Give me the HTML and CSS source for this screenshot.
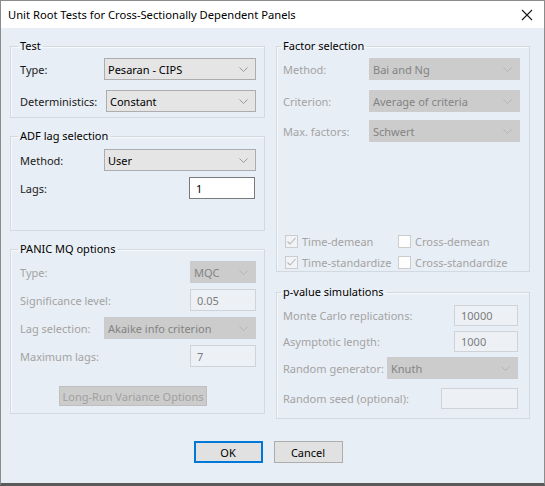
FILE: index.html
```html
<!DOCTYPE html>
<html>
<head>
<meta charset="utf-8">
<link rel="stylesheet" href="styles.css">
</head>
<body>
<div class="window">
  <div class="titlebar">
    <span class="title">Unit Root Tests for Cross-Sectionally Dependent Panels</span>
    <svg class="close" width="12" height="12" viewBox="0 0 12 12"><path d="M1 1L11 11M11 1L1 11" stroke="#1a1a1a" stroke-width="1.1" fill="none"/></svg>
  </div>
  <div class="content">
    <div class="columns">
      <div class="col">
        <fieldset class="group g-test">
          <legend>Test</legend>
          <div class="row r-first">
            <span class="lbl">Type:</span>
            <div class="combo w152"><span>Pesaran - CIPS</span><svg class="chev" width="9" height="5" viewBox="0 0 9 5"><path d="M0.5 0.5L4.5 4.5L8.5 0.5" fill="none" stroke="#9a9a9a"/></svg></div>
          </div>
          <div class="row r-gap10">
            <span class="lbl">Deterministics:</span>
            <div class="combo w150"><span>Constant</span><svg class="chev" width="9" height="5" viewBox="0 0 9 5"><path d="M0.5 0.5L4.5 4.5L8.5 0.5" fill="none" stroke="#9a9a9a"/></svg></div>
          </div>
        </fieldset>

        <fieldset class="group g-adf">
          <legend>ADF lag selection</legend>
          <div class="row r-first5">
            <span class="lbl">Method:</span>
            <div class="combo w152"><span>User</span><svg class="chev" width="9" height="5" viewBox="0 0 9 5"><path d="M0.5 0.5L4.5 4.5L8.5 0.5" fill="none" stroke="#9a9a9a"/></svg></div>
          </div>
          <div class="row r-gap6">
            <span class="lbl">Lags:</span>
            <div class="edit w66 mr1">1</div>
          </div>
        </fieldset>

        <fieldset class="group g-panic">
          <legend>PANIC MQ options</legend>
          <div class="row r-first dis">
            <span class="lbl">Type:</span>
            <div class="combo off w66"><span>MQC</span><svg class="chev" width="9" height="5" viewBox="0 0 9 5"><path d="M0.5 0.5L4.5 4.5L8.5 0.5" fill="none" stroke="#b4b4b4"/></svg></div>
          </div>
          <div class="row r-gap6 dis">
            <span class="lbl">Significance level:</span>
            <div class="edit off w66">0.05</div>
          </div>
          <div class="row r-gap6 dis">
            <span class="lbl">Lag selection:</span>
            <div class="combo off w152"><span>Akaike info criterion</span><svg class="chev" width="9" height="5" viewBox="0 0 9 5"><path d="M0.5 0.5L4.5 4.5L8.5 0.5" fill="none" stroke="#b4b4b4"/></svg></div>
          </div>
          <div class="row r-gap6 dis">
            <span class="lbl">Maximum lags:</span>
            <div class="edit off w66">7</div>
          </div>
          <div class="btnrow">
            <div class="btn-off">Long-Run Variance Options</div>
          </div>
        </fieldset>
      </div>

      <div class="col">
        <fieldset class="group g-factor">
          <legend>Factor selection</legend>
          <div class="row r-first dis">
            <span class="lbl">Method:</span>
            <div class="combo off w151"><span>Bai and Ng</span><svg class="chev" width="9" height="5" viewBox="0 0 9 5"><path d="M0.5 0.5L4.5 4.5L8.5 0.5" fill="none" stroke="#b4b4b4"/></svg></div>
          </div>
          <div class="row r-gap10 dis">
            <span class="lbl">Criterion:</span>
            <div class="combo off w151"><span>Average of criteria</span><svg class="chev" width="9" height="5" viewBox="0 0 9 5"><path d="M0.5 0.5L4.5 4.5L8.5 0.5" fill="none" stroke="#b4b4b4"/></svg></div>
          </div>
          <div class="row r-gap8 dis">
            <span class="lbl">Max. factors:</span>
            <div class="combo off w151"><span>Schwert</span><svg class="chev" width="9" height="5" viewBox="0 0 9 5"><path d="M0.5 0.5L4.5 4.5L8.5 0.5" fill="none" stroke="#b4b4b4"/></svg></div>
          </div>
          <div class="checks">
            <label class="chk"><span class="box checked"><svg width="11" height="11" viewBox="0 0 11 11"><path d="M1.5 5.5L4 8L9.5 2" fill="none" stroke="#b8b8b8" stroke-width="1.1"/></svg></span>Time-demean</label>
            <label class="chk"><span class="box"></span>Cross-demean</label>
            <label class="chk"><span class="box checked"><svg width="11" height="11" viewBox="0 0 11 11"><path d="M1.5 5.5L4 8L9.5 2" fill="none" stroke="#b8b8b8" stroke-width="1.1"/></svg></span>Time-standardize</label>
            <label class="chk"><span class="box"></span>Cross-standardize</label>
          </div>
        </fieldset>

        <fieldset class="group g-pvalue">
          <legend>p-value simulations</legend>
          <div class="row r-first dis">
            <span class="lbl">Monte Carlo replications:</span>
            <div class="edit off w64 mr2 h21">10000</div>
          </div>
          <div class="row r-gap4 dis">
            <span class="lbl">Asymptotic length:</span>
            <div class="edit off w64 mr2 h21">1000</div>
          </div>
          <div class="row r-gap5 dis">
            <span class="lbl">Random generator:</span>
            <div class="combo off w131 mr2"><span>Knuth</span><svg class="chev" width="9" height="5" viewBox="0 0 9 5"><path d="M0.5 0.5L4.5 4.5L8.5 0.5" fill="none" stroke="#b4b4b4"/></svg></div>
          </div>
          <div class="row r-gap8 dis">
            <span class="lbl">Random seed (optional):</span>
            <div class="edit off w77 mr2 h21"></div>
          </div>
        </fieldset>
      </div>
    </div>

    <div class="buttons">
      <div class="btn default">OK</div>
      <div class="btn">Cancel</div>
    </div>
  </div>
</div>
</body>
</html>
```

FILE: styles.css
```css
* { box-sizing: border-box; }

html, body {
  margin: 0;
  padding: 0;
  background: #e8eef5;
}

body {
  font-family: "Noto Sans", "Open Sans", sans-serif;
  font-size: 11px;
  color: #1a1a1a;
}

.window {
  width: 545px;
  height: 486px;
  border: 1px solid #8c8c8c;
  border-bottom: 3px solid #5a5a5a;
  background: #e8eef5;
  display: flex;
  flex-direction: column;
}

.titlebar {
  height: 27px;
  background: #ffffff;
  display: flex;
  align-items: center;
  justify-content: space-between;
  padding: 0 11px 0 7px;
  flex: none;
}

.title {
  font-size: 11.2px;
  color: #000;
}

.close { display: block; margin-top: 1px; }

.content {
  flex: 1;
  padding: 10px 14px 0 9px;
  display: flex;
  flex-direction: column;
}

.columns {
  display: grid;
  grid-template-columns: 255px 254px;
  column-gap: 11px;
  align-items: start;
}

.col {
  display: flex;
  flex-direction: column;
}

.group {
  margin: 0;
  border: 1px solid #d3d9e0;
  box-shadow: inset 1px 1px 0 #f6f9fc;
  padding: 0 8px 5px 9px;
  min-width: 0;
}

.group legend {
  padding: 0 2px;
  margin-left: -2px;
  line-height: 16px;
  color: #000;
}

.g-adf { margin-top: 10px; padding-bottom: 31px; }
.g-panic { margin-top: 10px; padding-bottom: 7px; }
.g-factor { padding-left: 6px; padding-right: 9px; padding-bottom: 1px; }
.g-pvalue { margin-top: 12px; padding-left: 6px; padding-right: 9px; padding-bottom: 9px; }

.row {
  display: flex;
  align-items: center;
  height: 22px;
}

.r-first { margin-top: 4px; }
.r-first5 { margin-top: 5px; }
.r-gap4 { margin-top: 4px; }
.r-gap5 { margin-top: 5px; }
.r-gap6 { margin-top: 6px; }
.r-gap8 { margin-top: 8px; }
.r-gap10 { margin-top: 10px; }

.lbl { white-space: nowrap; }
.dis .lbl { color: #a3a3a3; }

.combo {
  margin-left: auto;
  height: 22px;
  background: #e5e5e5;
  border: 1px solid #adadad;
  display: flex;
  align-items: center;
  justify-content: space-between;
  padding: 0 7px 0 3px;
  color: #000;
  white-space: nowrap;
}

.combo.off {
  background: #cccccc;
  border-color: #cccccc;
  color: #838383;
}

.chev { display: block; flex: none; }

.edit {
  margin-left: auto;
  height: 22px;
  background: #ffffff;
  border: 1px solid #7a7a7a;
  display: flex;
  align-items: center;
  padding: 0 6px;
  color: #000;
}

.edit.off {
  background: #edf1f6;
  border-color: #cfd3d8;
  color: #7c7c7c;
}

.h21 { height: 21px; }
.mr1 { margin-right: 1px; }
.mr2 { margin-right: 2px; }
.w64 { width: 64px; }
.w66 { width: 66px; }
.w77 { width: 77px; }
.w131 { width: 131px; }
.w150 { width: 150px; }
.w151 { width: 151px; }
.w152 { width: 152px; }

.btnrow {
  margin-top: 19px;
  padding-left: 39px;
  display: flex;
}

.btn-off {
  width: 148px;
  height: 20px;
  background: #cccccc;
  border: 1px solid #bfbfbf;
  color: #a0a0a0;
  display: flex;
  align-items: center;
  justify-content: center;
  white-space: nowrap;
}

.checks {
  margin-top: 91px;
  display: grid;
  grid-template-columns: 113px auto;
  row-gap: 5px;
  padding-left: 2px;
}

.chk {
  display: flex;
  align-items: center;
  height: 16px;
  color: #a3a3a3;
  white-space: nowrap;
}

.box {
  width: 13px;
  height: 13px;
  border: 1px solid #cccccc;
  background: #fdfdfd;
  margin-right: 4px;
  display: flex;
  align-items: center;
  justify-content: center;
  flex: none;
}

.box.checked { background: #f1f3f6; }
.box svg { display: block; }

.buttons {
  margin-top: 22px;
  display: flex;
  justify-content: center;
  gap: 11px;
  padding-right: 4px;
}

.btn {
  width: 69px;
  height: 22px;
  background: #e1e1e1;
  border: 1px solid #adadad;
  display: flex;
  align-items: center;
  justify-content: center;
  color: #000;
}

.btn.default {
  border: 2px solid #0078d7;
}
```
